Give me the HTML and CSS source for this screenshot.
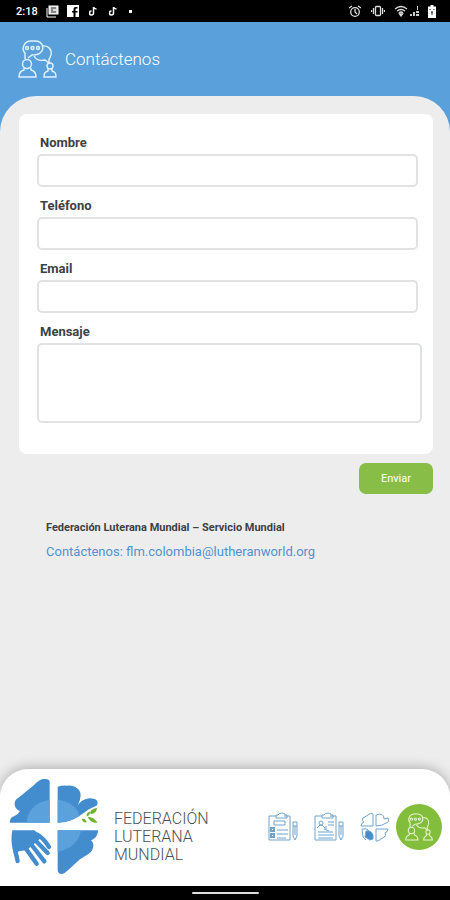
FILE: index.html
```html
<!DOCTYPE html>
<html lang="es">
<head>
  <meta charset="UTF-8">
  <meta name="viewport" content="width=device-width, initial-scale=1">
  <title>Contáctenos</title>
  <link rel="stylesheet" href="styles.css">
</head>
<body>
  <svg class="sprite" aria-hidden="true">
    <symbol id="icon-contact" viewBox="0 0 39 38">
      <path d="M7 19v-6C3 9 6 1 13 1h4c8 0 10 8 5 12-2 2-5 2-8 2l-4 3"/>
      <path d="M24 6c7-1 10 4 9 9-1 2-1 3-2 4v4l-4-3c-5 1-9 0-11-4"/>
      <circle cx="9" cy="8" r="1.500"/><circle cx="14.500" cy="8" r="1.500"/><circle cx="20" cy="8" r="1.500"/>
      <circle cx="9" cy="24" r="4.500"/>
      <path d="M6 28v2c-4 1-5 3-5 7h17c0-4-1-6-5-7v-2"/>
      <circle cx="32" cy="26" r="3"/>
      <path d="M30 29v2c-3 1-4 2-4 6h12c0-4-1-5-4-6v-2"/>
    </symbol>
  </svg>

  <div class="statusbar">
    <div class="status-group">
      <span class="clock">2:18</span>
      <svg width="13" height="13" viewBox="0 0 13 13" fill="none" stroke="#fff"><rect x="3" y="1" width="9" height="8" fill="#ddd"/><path d="M1 3v9h9"/><path d="M5 3h5M5 5h2M5 7h5" stroke="#333"/></svg>
      <svg width="12" height="12" viewBox="0 0 12 12"><path fill="#fff" d="M0 0h12v12H8.500V7.500h2V6h-2V4.500q0-1 1-1h1V2h-2Q6.500 2 6.500 4v2H5v1.500h1.500V12H0z"/></svg>
      <svg class="note" width="8" height="10" viewBox="0 0 8 10" fill="none" stroke="#fff" stroke-width="1.500"><path d="M4.500 1v6a2 2 0 1 1-2-2M4.500 1q1 2 3 2"/></svg>
      <svg class="note" width="8" height="10" viewBox="0 0 8 10" fill="none" stroke="#fff" stroke-width="1.500"><path d="M4.500 1v6a2 2 0 1 1-2-2M4.500 1q1 2 3 2"/></svg>
      <span class="dot"></span>
    </div>
    <div class="status-group">
      <svg width="12" height="12" viewBox="0 0 12 12" fill="none" stroke="#ddd" stroke-width="1.300"><circle cx="6" cy="7" r="4.300"/><path d="M0 3l3-2M12 3L9 1M6 4v3l2 2"/></svg>
      <svg class="vibrate" width="14" height="12" viewBox="0 0 14 12" fill="none" stroke="#ddd" stroke-width="1.300"><rect x="4.500" y="1.500" width="5" height="9" rx="1"/><path d="M2.500 3v6M11.500 3v6M.5 5v2M13.500 5v2"/></svg>
      <div class="signals">
        <svg width="14" height="12" viewBox="0 0 14 12" fill="none" stroke="#ddd" stroke-width="1.300"><path d="M1 4q6-5 12 0M3 6q4-3 8 0M5 8q2-2 4 0"/><path d="M5.500 9h3L7 11z" fill="#ddd"/></svg>
        <svg width="10" height="12" viewBox="0 0 10 12" fill="#ccc"><path d="M0 9h2v2H0zM3 7h2v4H3zM7 1h1v4H7zM6 6h3v2H6zM6 9h3v2H6z"/></svg>
      </div>
      <svg width="8" height="13" viewBox="0 0 8 13"><path d="M2.500 0h3v1.500H8V13H0V1.500h2.500z" fill="#fff"/><path d="M2 4v1M6 4v1M4 7v3M3 7h2" stroke="#222"/></svg>
    </div>
  </div>

  <div class="app">
    <header class="header">
      <svg class="header-icon"><use href="#icon-contact"/></svg>
      <h1 class="title">Contáctenos</h1>
    </header>

    <div class="content">
      <main class="main">
        <form>
          <div class="card">
            <label for="nombre">Nombre</label>
            <input id="nombre" type="text">
            <label for="telefono">Teléfono</label>
            <input id="telefono" type="tel">
            <label for="email">Email</label>
            <input id="email" type="email">
            <label for="mensaje">Mensaje</label>
            <textarea id="mensaje"></textarea>
          </div>
          <button class="send" type="submit">Enviar</button>
        </form>
        <div class="info">
          <strong>Federación Luterana Mundial – Servicio Mundial</strong>
          <a href="mailto:flm.colombia@lutheranworld.org">Contáctenos: flm.colombia@lutheranworld.org</a>
        </div>
      </main>

      <footer class="footer">
        <div class="brand">
          <svg class="logo" viewBox="27 54 270 291">
            <g fill="#438cce">
              <path d="M149 188V64q-3-9-19-7-12 2-28 18L73 99q-13 11-23 18-9 9-5 22 3 10 15 14-5 11-18 16-12 3-13 19z"/>
              <path d="M173 188V80q14-4 27-3c22-3 42 10 42 28q0 12-8 30 8-13 24-18 12-5 28 1 7 3 7 14-2 6-12 9-15 5-30 18-28 21-55 27z"/>
              <path d="M173 211h121c0 14-7 26-22 30 10 6 10 18 5 28-6 12-22 18-36 28-18 15-32 31-48 43-10 5-20 1-20-10z"/>
              <path d="M37 211h66l24 19-46 40-24 4-14 10c-8-20-11-48-6-73z"/>
            </g>
            <path fill="#5ba2dc" d="M149 119v69H79q7-58 70-69zM173 119q35 4 53 25 10 10 12 25-30 17-65 19zM173 211h70q-8 51-70 65z"/>
            <g fill="none" stroke="#438cce" stroke-width="13" stroke-linecap="round">
              <path d="M112 224q20 12 35 37M100 235l43 44M88 246l45 58M72 258l38 53"/>
              <path d="M44 250q2 30 9 53"/>
            </g>
            <path fill="#6fb52c" d="M291 144c-15 2-22 9-19 18 12 0 18-7 19-18zM271 154q-13 5-11 15 10-1 11-15zM245 177q12-3 15 10-12 2-15-10zM263 170q18 0 30 18-22 2-30-18z"/>
          </svg>
          <div class="brand-name">FEDERACIÓN<br>LUTERANA<br>MUNDIAL</div>
        </div>
        <nav class="tabs">
          <a href="#" aria-label="Formulario">
            <svg class="tab-icon" viewBox="0 0 30 30">
              <path d="M8 4H1v24h21V4h-6M8 6V3h2q1-2 4-2t3 2h2v3zM6 9h11v4H6z"/>
              <path d="M9 18h11M9 22h11M9 26h9"/><path d="M3 16h3v3H3zM3 22h3v3H3z" stroke-width="2"/>
              <path d="M25 10h4v14l-2 4-2-4zM25 14h4M27 14v9"/>
            </svg>
          </a>
          <a href="#" aria-label="Reporte">
            <svg class="tab-icon" viewBox="0 0 30 30">
              <path d="M8 4H1v24h21V4h-6M8 6V3h2q1-2 4-2t3 2h2v3z"/>
              <circle cx="7" cy="11" r="2"/><path d="M3 16q4-6 8 0M14 10h6M14 13h6M10 17l5 2M4 20h15M4 23h16M4 26h15M12 14v4"/>
              <path d="M25 10h4v14l-2 4-2-4zM25 14h4M27 14v9"/>
            </svg>
          </a>
          <a href="#" aria-label="Federación">
            <svg class="tab-icon" viewBox="0 0 30 30">
              <path d="M13 14V2q-2-2-5 1L3 6q-2 3 1 4-3 1-3 4zM16 14V3q8-3 8 4l4-1q2 4-2 5-4 3-10 3M16 17h12q0 3-3 4 2 3-1 4l-6 4h-2z"/>
              <path d="M2 17h5l6 6M2 17l1 8 3 3"/><path d="M6 19q5-1 7 4v4l-3 1-5-3z" fill="#438cce"/>
            </svg>
          </a>
          <a class="active" href="#" aria-label="Contáctenos" aria-current="page">
            <svg class="tab-icon"><use href="#icon-contact"/></svg>
          </a>
        </nav>
      </footer>
    </div>
  </div>

  <div class="navbar"><span class="home-line"></span></div>
</body>
</html>
```

FILE: styles.css
```css
* { box-sizing: border-box; }
body {
  margin: 0;
  min-height: 100vh;
  display: flex;
  flex-direction: column;
  font-family: Roboto, "Liberation Sans", sans-serif;
  background: #000;
  color: #3d4245;
}
.sprite {
  display: none;
}
.statusbar {
  height: 22px;
  padding: 0 14px 0 16px;
  display: flex;
  justify-content: space-between;
  align-items: center;
  color: #fff;
}
.status-group {
  display: flex;
  align-items: center;
  gap: 8px;
}
.clock {
  font-size: 11px;
  font-weight: 500;
}
.note {
  margin: 0 2px;
}
.dot {
  width: 3px;
  height: 3px;
  margin-left: 2px;
  background: #fff;
}
.vibrate {
  margin: 0 1px 0 2px;
}
.signals {
  display: flex;
  gap: 2px;
}
.app {
  flex: 1;
  display: flex;
  flex-direction: column;
  background: #5aa0db;
}
.header {
  height: 74px;
  padding: 0 18px;
  display: flex;
  align-items: center;
  gap: 8px;
  color: #fff;
}
.header-icon {
  width: 39px;
  height: 38px;
  fill: none;
  stroke: #e2f4ff;
  stroke-width: 1.4;
}
.title {
  margin: 0;
  font-size: 17px;
  font-weight: 300;
}
.content {
  flex: 1;
  display: flex;
  flex-direction: column;
  background: #ededed;
  border-radius: 36px 36px 0 0;
}
.main {
  flex: 1;
  padding: 18px 17px 24px 19px;
}
.card {
  padding: 20px 11px 31px 18px;
  background: #fff;
  border-radius: 8px;
}
label {
  display: block;
  margin-left: 3px;
  padding-bottom: 2px;
  font-size: 13px;
  line-height: 18px;
  font-weight: 700;
}
input,
textarea {
  display: block;
  border: 2px solid #e1e2e3;
  border-radius: 5px;
  background: #fff;
  padding: 6px;
  font: inherit;
}
input {
  width: calc(100% - 4px);
  height: 33px;
  margin-bottom: 10px;
}
textarea {
  width: 100%;
  height: 80px;
  resize: none;
}
.send {
  display: block;
  width: 74px;
  height: 31px;
  margin: 9px 0 0 auto;
  padding: 0;
  border: none;
  border-radius: 7px;
  background: #88bd48;
  color: #fff;
  font-family: inherit;
  font-size: 11px;
  cursor: pointer;
}
.info {
  margin: 25px 0 0 27px;
  display: flex;
  flex-direction: column;
  align-items: flex-start;
  gap: 6px;
  line-height: 18px;
}
.info strong {
  font-size: 11px;
}
.info a {
  font-size: 13px;
  color: #5292cf;
  text-decoration: none;
}
.footer {
  padding: 9px 8px 11px 9px;
  display: flex;
  justify-content: space-between;
  align-items: center;
  background: #fff;
  border-radius: 28px 28px 0 0;
  box-shadow: 0 -2px 12px rgba(0,0,0,0.25);
}
.brand {
  display: flex;
  align-items: center;
  gap: 15px;
}
.logo {
  width: 90px;
  height: 97px;
}
.brand-name {
  padding-top: 20px;
  font-size: 16px;
  line-height: 18px;
  font-weight: 300;
  color: #4d5154;
}
.tabs {
  display: flex;
  align-items: center;
  gap: 16px;
}
.tabs a {
  display: flex;
  align-items: center;
  justify-content: center;
}
.tab-icon {
  width: 30px;
  height: 30px;
  fill: none;
  stroke: #6fa4cc;
}
.tabs .active {
  width: 46px;
  height: 46px;
  margin-left: -10px;
  border-radius: 50%;
  background: #82bd3b;
}
.active .tab-icon {
  width: 28px;
  height: 28px;
  stroke: #e9f7cf;
  stroke-width: 1.4;
}
.navbar {
  height: 14px;
  display: flex;
  align-items: center;
  justify-content: center;
}
.home-line {
  width: 67px;
  height: 2px;
  border-radius: 1px;
  background: #ddd;
}
```
